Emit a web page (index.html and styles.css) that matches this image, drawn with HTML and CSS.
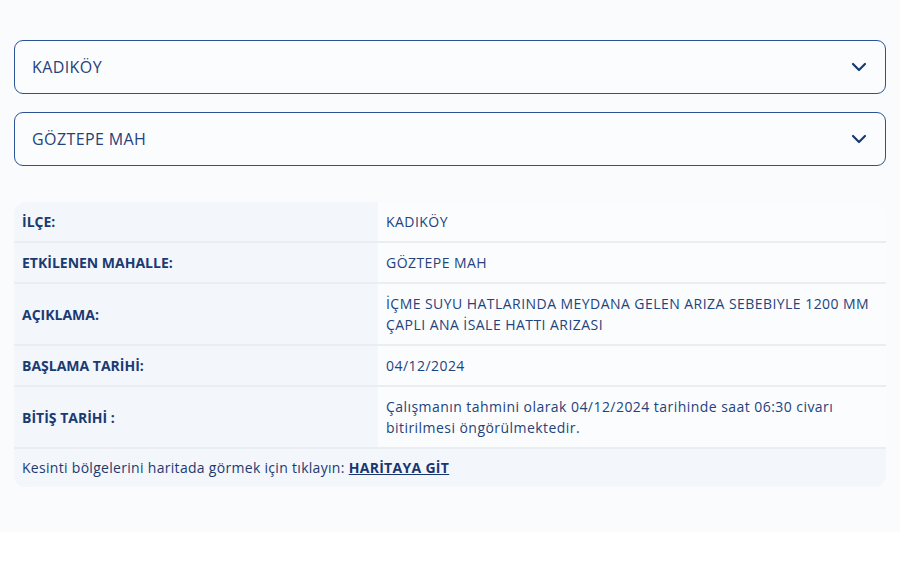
FILE: index.html
```html
<!DOCTYPE html>
<html lang="tr">
<head>
    <meta charset="UTF-8">
    <meta name="viewport" content="width=device-width, initial-scale=1.0">
    <title>Su Kesintileri</title>
    <link rel="stylesheet" href="styles.css">
</head>
<body>
    <section class="panel">
        <div class="select">
            <span>KADIKÖY</span>
            <svg class="chev" width="16" height="10" viewBox="0 0 16 10"><path d="M2 2l6 6 6-6" fill="none" stroke="#173a72" stroke-width="2.2" stroke-linecap="round" stroke-linejoin="round"/></svg>
        </div>
        <div class="select">
            <span>GÖZTEPE MAH</span>
            <svg class="chev" width="16" height="10" viewBox="0 0 16 10"><path d="M2 2l6 6 6-6" fill="none" stroke="#173a72" stroke-width="2.2" stroke-linecap="round" stroke-linejoin="round"/></svg>
        </div>

        <div class="info">
            <div class="row">
                <div class="label">İLÇE:</div>
                <div class="value">KADIKÖY</div>
            </div>
            <div class="row">
                <div class="label">ETKİLENEN MAHALLE:</div>
                <div class="value">GÖZTEPE MAH</div>
            </div>
            <div class="row">
                <div class="label">AÇIKLAMA:</div>
                <div class="value">İÇME SUYU HATLARINDA MEYDANA GELEN ARIZA SEBEBIYLE 1200 MM ÇAPLI ANA İSALE HATTI ARIZASI</div>
            </div>
            <div class="row">
                <div class="label">BAŞLAMA TARİHİ:</div>
                <div class="value">04/12/2024</div>
            </div>
            <div class="row">
                <div class="label">BİTİŞ TARİHİ :</div>
                <div class="value">Çalışmanın tahmini olarak 04/12/2024 tarihinde saat 06:30 civarı bitirilmesi öngörülmektedir.</div>
            </div>
            <div class="foot">Kesinti bölgelerini haritada görmek için tıklayın: <a href="#">HARİTAYA GİT</a></div>
        </div>
    </section>
</body>
</html>
```

FILE: styles.css
```css
body { margin: 0; background: #fff; font-family: "Open Sans", Lato, sans-serif; color: #1c3a70; }
.panel { background: #f9fbfd; padding: 40px 14px 45px; }

.select { display: flex; align-items: center; justify-content: space-between; height: 52px; padding: 0 18px 0 17px; border: 1px solid #2d5393; border-radius: 9px; background: #fbfcfe; font-size: 16px; letter-spacing: 0.4px; color: #24427a; margin-bottom: 18px; }
.select + .select { margin-bottom: 0; }
.chev { display: block; }

.info { margin-top: 36px; border-radius: 12px; overflow: hidden; background: #f3f6fb; font-size: 14px; }
.row { display: grid; grid-template-columns: 364px 1fr; border-bottom: 2px solid #eaedf1; }
.label { display: flex; align-items: center; padding: 9px 8px; line-height: 21px; font-weight: 700; background: #f3f6fb; color: #1a3a72; }
.value { padding: 9px 0 9px 8px; line-height: 21px; letter-spacing: 0.45px; background: #fbfcfe; color: #23437c; }
.foot { padding: 8px 8px 9px; line-height: 21px; letter-spacing: 0.3px; background: #f3f6fb; color: #1c3a70; }
.foot a { color: #183670; font-weight: 700; text-decoration: underline; }
```
